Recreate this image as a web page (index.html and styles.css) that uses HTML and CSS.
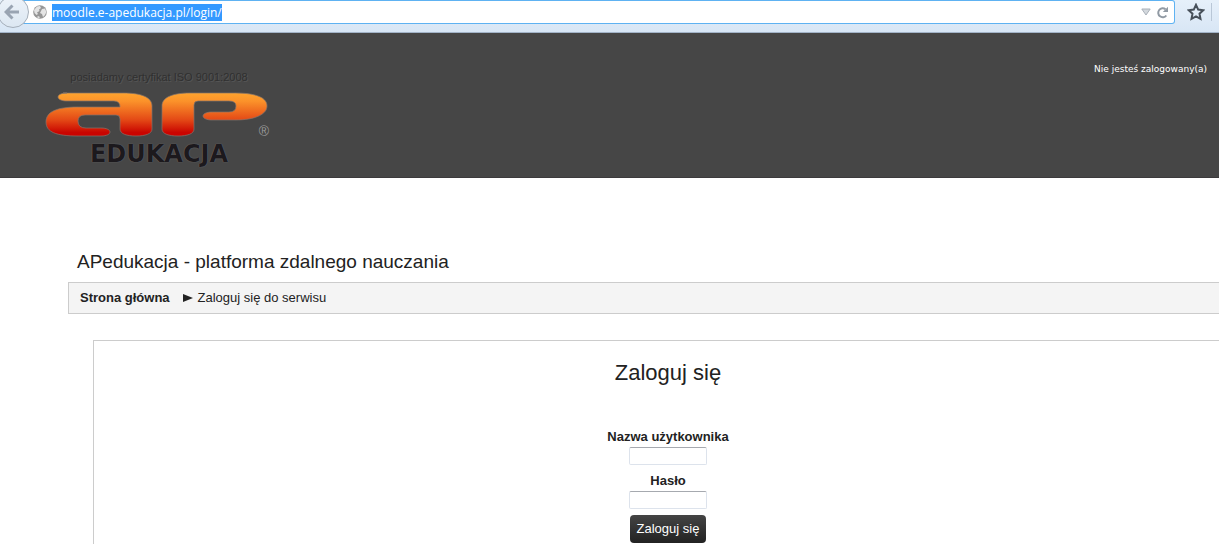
FILE: index.html
```
<!DOCTYPE html>
<html lang="pl">
<head>
<meta charset="utf-8">
<title>APedukacja - platforma zdalnego nauczania</title>
<link rel="stylesheet" href="styles.css">
</head>
<body>
<div class="toolbar">
  <button class="back" type="button" aria-label="Wstecz">
    <svg width="16" height="16" viewBox="0 0 16 16"><path d="M8.5 1.5 2 8l6.5 6.5M2.500 8H15" fill="none" stroke="#99a4b2" stroke-width="3"/></svg>
  </button>
  <div class="address">
    <svg class="globe" width="14" height="14" viewBox="0 0 14 14"><circle cx="7" cy="7" r="6.800" fill="#969696"/><path d="M1 5 4 1.500 7 1 8 3 6 4.500 6.500 6 4 7.500 5 9 3.500 10 1.500 8zM9 4l3-.5L13.400 7 12 10l-2 2-1-3-2-1 1-2zM5 11l2 1-1 1.300-2-1z" fill="#e4e4e4"/></svg>
    <input class="url" type="text" aria-label="Adres" value="moodle.e-apedukacja.pl/login/">
    <button class="tool tool-end" type="button" aria-label="Historia adresów">
      <svg width="10" height="8" viewBox="0 0 10 8"><path d="M.8 1h8.400L5 7z" fill="#d3d8dd" stroke="#a9b0b8"/></svg>
    </button>
    <button class="tool" type="button" aria-label="Odśwież">
      <svg width="13" height="13" viewBox="0 0 13 13"><path d="M10.300 9.500A4.500 4.500 0 1 1 9.500 3.200" fill="none" stroke="#919aa4" stroke-width="2"/><path d="M12 .8V6H6.800z" fill="#919aa4"/></svg>
    </button>
  </div>
  <button class="star" type="button" aria-label="Dodaj zakładkę">
    <svg width="18" height="18" viewBox="0 0 18 18"><path d="M9 1.800l2.200 4.800 5.100.6-3.800 3.500 1 5.200L9 13.400l-4.500 2.500 1-5.200L1.700 7.200l5.100-.6z" fill="none" stroke="#48515b" stroke-width="2"/></svg>
  </button>
</div>

<header class="header">
  <a class="logo" href="#" aria-label="AP Edukacja">
    <span class="certificate">posiadamy certyfikat ISO 9001:2008</span>
    <span class="brand">
      <svg width="224" height="46" viewBox="0 0 224 46">
        <defs><linearGradient id="fire" x1="0" y1="0" x2="0" y2="46" gradientUnits="userSpaceOnUse"><stop offset="0" stop-color="#ffa62e"/><stop offset=".2" stop-color="#fb922a"/><stop offset=".6" stop-color="#e44a16"/><stop offset=".88" stop-color="#c90500"/><stop offset="1" stop-color="#c00"/></linearGradient></defs>
        <g fill="url(#fire)" stroke="#85746b" stroke-width=".7">
          <path d="M18 1H78C96 1 107 5 107 14V37C107 42 100 44 91 44S75 42 75 37V27Q75 23 71 23H40Q33 23 33 29Q33 36 41 36H56C68 36 68 44 56 44H33C11 44 1 40 1 30S11 15 33 15H75Q75 9 69 9H22C10 9 10 1 22 1Z"/>
          <path d="M145 1H190C212 1 222 6 222 14S211 28 190 28H167C155 28 155 20 167 20H184Q191 20 191 14Q191 9 184 9H153Q149 9 149 13V37C149 42 142 44 133 44S117 42 117 37V14C117 5 128 1 145 1Z"/>
        </g>
      </svg>
      <span class="registered">®</span>
    </span>
    <span class="wordmark">EDUKACJA</span>
  </a>
  <p class="status">Nie jesteś zalogowany(a)</p>
</header>

<main class="page">
  <h1 class="title">APedukacja - platforma zdalnego nauczania</h1>
  <nav class="breadcrumb" aria-label="Ścieżka">
    <a class="home" href="#">Strona główna</a>
    <svg width="10" height="8" viewBox="0 0 10 8"><path d="M0 0 10 4 0 8z" fill="#222"/></svg>
    <span>Zaloguj się do serwisu</span>
  </nav>
  <section class="panel">
    <h2 class="heading">Zaloguj się</h2>
    <form class="form">
      <label class="label" for="username">Nazwa użytkownika</label>
      <input class="field" id="username" type="text">
      <label class="label" for="password">Hasło</label>
      <input class="field" id="password" type="password">
      <button class="submit" type="submit">Zaloguj się</button>
    </form>
  </section>
</main>
</body>
</html>
```
FILE: styles.css
```
* { box-sizing: border-box; }

body {
  margin: 0;
  overflow: hidden;
  background: #fff;
  color: #222;
  font: 13px/16px "Liberation Sans", Arial, sans-serif;
}

button { padding: 0; border: 0; background: none; }
svg { display: block; flex: none; }

.toolbar {
  display: flex;
  align-items: flex-start;
  height: 33px;
  background: linear-gradient(#e6f0fa, #d8e6f5);
  border-bottom: 1px solid #a3b4c8;
}

.back {
  display: flex;
  align-items: center;
  justify-content: center;
  flex: none;
  z-index: 1;
  width: 32px;
  height: 32px;
  margin: -4px 0 0 -3px;
  padding-right: 2px;
  border: 1px solid #a5afba;
  border-radius: 50%;
  background: linear-gradient(#edf3f9, #dce7f2);
}

.address {
  display: flex;
  align-items: center;
  flex: 1;
  height: 24px;
  margin-left: -8px;
  padding: 0 5px 0 12px;
  border: 1px solid #5eb2f2;
  border-left: 0;
  border-radius: 0 3px 3px 0;
  background: #fff;
}

.url {
  field-sizing: content;
  height: 17px;
  margin-left: 5px;
  padding: 0;
  border: 0;
  background: #39f;
  color: #fff;
  font: 12px/17px "Open Sans", "Noto Sans", sans-serif;
}

.tool { margin-left: 5px; }
.tool-end { margin-left: auto; }

.star {
  margin: 3px 7px 0 12px;
  padding-right: 6px;
  border-right: 1px solid #b9c7d7;
}

.header {
  display: flex;
  align-items: flex-start;
  justify-content: space-between;
  padding: 30px 12px 12px 2px;
  background: #464646;
  border-bottom: 1px solid #3c3a3c;
}

.logo {
  display: flex;
  flex-direction: column;
  align-items: center;
  width: 314px;
  padding-top: 6px;
  text-decoration: none;
}

.certificate {
  color: #303030;
  font-size: 11px;
  line-height: 16px;
  text-shadow: 1px 1px #555;
}

.brand {
  display: flex;
  align-items: flex-end;
  margin: 7px 0 0 -4px;
}

.registered {
  width: 0;
  direction: rtl;
  color: #999;
  font-size: 14px;
  line-height: 14px;
}

.wordmark {
  margin-top: 5px;
  color: #1c191d;
  font: bold 24px/22px "DejaVu Sans", sans-serif;
  text-shadow: 0 0 1px #858585;
}

.status {
  margin: 0;
  color: #fff;
  font: 9px/12px "DejaVu Sans", sans-serif;
}

.page { padding: 72px 0 0 68px; }

.title {
  margin: 0 0 8px;
  padding-left: 9px;
  font-size: 19px;
  font-weight: normal;
  line-height: 24px;
}

.breadcrumb {
  display: flex;
  align-items: center;
  height: 32px;
  margin-right: -24px;
  padding-left: 11px;
  border: 1px solid #ccc;
  background: #f4f4f4;
}

.breadcrumb svg { margin: 0 5px 0 13px; }

.home {
  color: #222;
  font-weight: bold;
  text-decoration: none;
}

.panel {
  margin: 26px -24px 0 25px;
  padding: 18px 0 24px;
  border: 1px solid #ccc;
}

.heading {
  margin: 0 0 42px;
  font-size: 22px;
  font-weight: normal;
  line-height: 28px;
  text-align: center;
}

.form {
  display: flex;
  flex-direction: column;
  align-items: center;
}

.label {
  font-weight: bold;
  line-height: 16px;
}

.field {
  width: 78px;
  height: 18px;
  margin: 2px 0 8px;
  border: 1px solid #dde3ec;
  border-top-color: #a6a9af;
  border-radius: 2px;
  background: #fff;
}

.submit {
  height: 28px;
  margin-top: -2px;
  padding: 0 7px;
  border-radius: 4px;
  background: linear-gradient(#444, #222);
  color: #fff;
  font: 13px/28px "Liberation Sans", Arial, sans-serif;
}
```
